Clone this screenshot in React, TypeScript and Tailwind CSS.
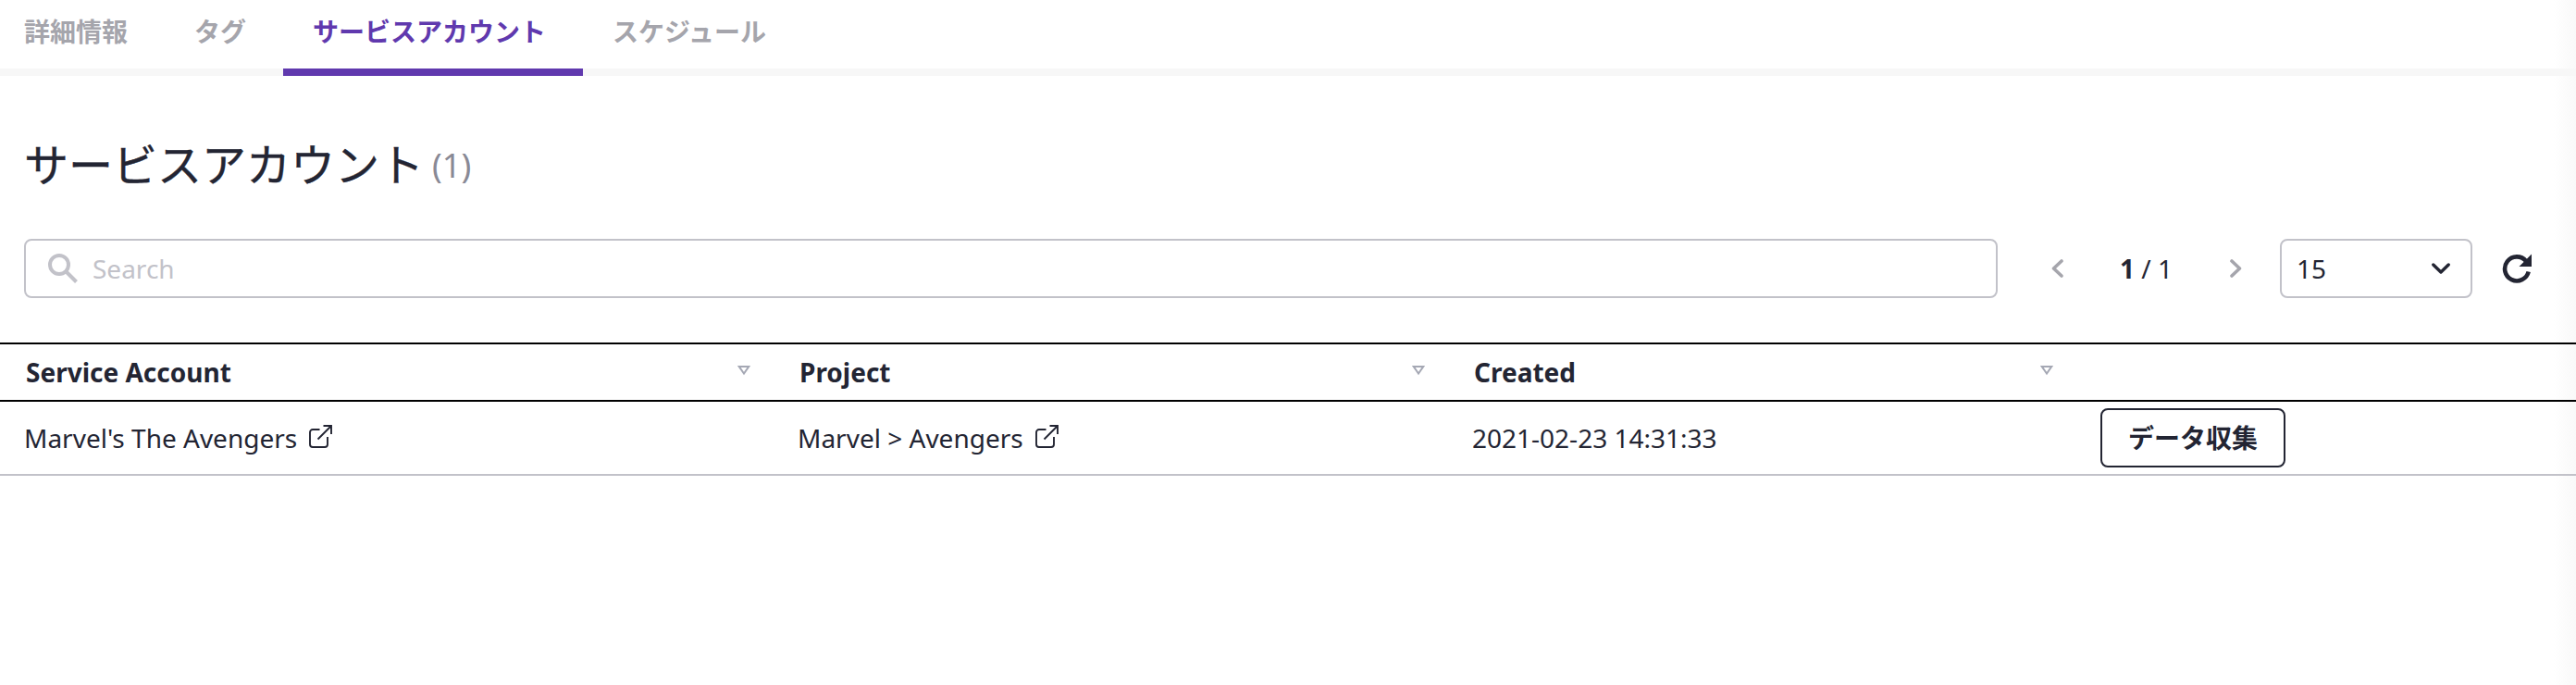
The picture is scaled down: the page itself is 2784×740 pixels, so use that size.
import React from "react";

const tabs = [
  { label: "詳細情報", active: false },
  { label: "タグ", active: false },
  { label: "サービスアカウント", active: true },
  { label: "スケジュール", active: false },
];

function ExternalLink() {
  return (
    <svg className="mt-[-2px] ml-[12px] h-[26px] w-[26px]" viewBox="0 0 26 26" fill="none" stroke="currentColor" strokeWidth="1.9">
      <path d="M12.5 5H5a3 3 0 0 0-3 3v13a3 3 0 0 0 3 3h13a3 3 0 0 0 3-3v-8" />
      <path d="M16.5 1h8.5v9M25 1L10.5 15.5" />
    </svg>
  );
}

function SortIcon() {
  return (
    <svg className="mt-[-4px] h-[12px] w-[14px]" viewBox="0 0 14 12" fill="none" stroke="#a5a8b4" strokeWidth="2">
      <path d="M1.8 2H12.2L7 9.5Z" />
    </svg>
  );
}

function Tabs() {
  return (
    <nav className="flex h-[82px] shadow-[inset_0_-8px_0_#f7f7f7]">
      {tabs.map((t, i) => (
        <div
          key={t.label}
          className={
            (i === 0 ? "pl-[26px]" : "pl-8") +
            " pr-10 pt-[14px] text-[28px] leading-[40px] font-bold " +
            (t.active ? "border-b-8 border-[#6039ae] text-[#6039ae]" : "text-[#a5a5ac]")
          }
        >
          {t.label}
        </div>
      ))}
    </nav>
  );
}

export default function App() {
  return (
    <div className="h-[740px] w-[2784px] overflow-hidden bg-[linear-gradient(to_left,#f9f9f9,#ffffff_24px)] font-['Noto_Sans','Noto_Sans_CJK_JP',sans-serif] text-[28px] text-[#232533]">
      <Tabs />
      <h1 className="mt-[60px] flex h-[72px] pl-[26px] text-[48px] leading-[72px]">
        <span className="[-webkit-text-stroke:0.4px_#232533]">サービスアカウント</span>
        <span className="ml-[9px] text-[36px] leading-[73px] text-[#898995]">(1)</span>
      </h1>
      <div className="mt-[44px] flex h-16 items-center pl-[26px]">
        <div className="flex h-16 w-[2133px] items-center rounded-lg border-2 border-[#c2c2c9] pl-[24px] text-[#c2c2c9]">
          <svg className="h-[32px] w-[32px]" viewBox="0 0 32 32" fill="none" stroke="currentColor" strokeWidth="4">
            <circle cx="12" cy="12" r="10" />
            <path d="M19.5 19.5L30.5 30.5" />
          </svg>
          <span className="ml-[16px]">Search</span>
        </div>
        <svg className="ml-[58px] h-[20px] w-[13px]" viewBox="0 0 13 20" fill="none" stroke="#a5a5ac" strokeWidth="3.6" strokeLinecap="round" strokeLinejoin="round">
          <path d="M11 2L2.5 10L11 18" />
        </svg>
        <div className="ml-[61px] w-[119px] whitespace-pre"><b>1</b> / 1</div>
        <svg className="h-[20px] w-[13px]" viewBox="0 0 13 20" fill="none" stroke="#a5a5ac" strokeWidth="3.6" strokeLinecap="round" strokeLinejoin="round">
          <path d="M2 2L10.5 10L2 18" />
        </svg>
        <div className="ml-[41px] flex h-16 w-[208px] items-center justify-between rounded-lg border-2 border-[#c2c2c9] pl-4 pr-[22px]">
          15
          <svg className="h-[12px] w-[20px]" viewBox="0 0 20 12" fill="none" stroke="currentColor" strokeWidth="3.4" strokeLinecap="round" strokeLinejoin="round">
            <path d="M1.8 2L10 10L18.2 2" />
          </svg>
        </div>
        <svg className="ml-[32px] h-[32px] w-[32px]" viewBox="0 0.5 32 32" fill="none">
          <path d="M26 8.5A13 13 0 1 0 28.7 20" stroke="currentColor" strokeWidth="4.6" />
          <path d="M32 1V14.5H18.5Z" fill="currentColor" />
        </svg>
      </div>
      <div className="mt-12 grid h-[64px] grid-cols-[837px_729px_679px_539px] items-center border-y-2 border-black font-bold">
        {["Service Account", "Project", "Created"].map((h) => (
          <div key={h} className="flex items-center justify-between pl-[27px] pr-[26px] first:pl-[28px]">
            {h}
            <SortIcon />
          </div>
        ))}
      </div>
      <div className="grid h-[80px] grid-cols-[836px_729px_679px_540px] items-center border-b-2 border-[#c2c2c9]">
        <div className="flex items-center pl-[26px]">Marvel's The Avengers<ExternalLink /></div>
        <div className="flex items-center pl-[26px]">Marvel &gt; Avengers<ExternalLink /></div>
        <div className="pl-[26px]">2021-02-23 14:31:33</div>
        <div className="pl-[26px]">
          <button className="block h-16 w-[200px] rounded-lg border-2 border-[#232533] text-[28px] font-bold">データ収集</button>
        </div>
      </div>
    </div>
  );
}
